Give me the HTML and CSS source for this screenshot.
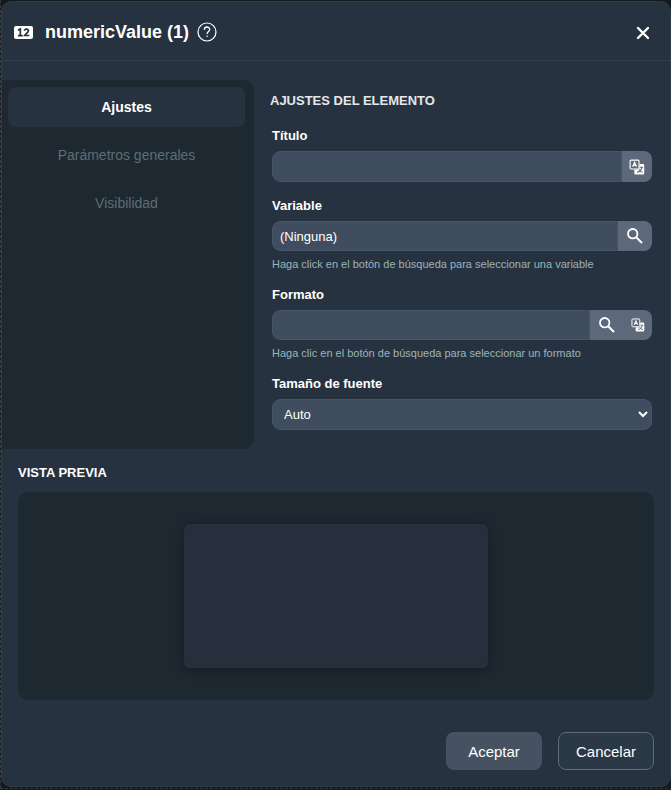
FILE: index.html
```html
<!DOCTYPE html>
<html lang="es">
  <head>
    <meta charset="utf-8">
    <meta name="viewport" content="width=device-width, initial-scale=1">
    <title>numericValue (1)</title>
    <link rel="stylesheet" href="styles.css">
  </head>
  <body>
    <!-- Shared icons -->
    <svg class="icon-defs" aria-hidden="true">
      <symbol id="icon-search" viewBox="0 0 16 16">
        <circle cx="5.7" cy="5.7" r="4.7" fill="none" stroke="currentColor" stroke-width="1.8"></circle>
        <path d="M9.2 9.2L15 15" fill="none" stroke="currentColor" stroke-width="2"></path>
      </symbol>
      <symbol id="icon-translate" viewBox="0 0 16 16">
        <path d="M10.5 5H14a1.2 1.2 0 0 1 1.2 1.2v8A1.2 1.2 0 0 1 14 15.4H6.5a1.2 1.2 0 0 1-1.2-1.2V10.5h5.2z" fill="currentColor"></path>
        <rect x="1.1" y="1.1" width="8.9" height="8.9" rx="1" fill="#5d697a" stroke="currentColor" stroke-width="1.1"></rect>
        <path d="M3.7 7.8l1.9-4.6 1.9 4.6M4.4 6.3h2.4" fill="none" stroke="currentColor" stroke-width="1.2"></path>
        <path d="M11 8.3h3M13 8.5c-.6 2.5-2.2 4-5 4.8M10 10.8c.8 1.3 2 2.1 3.6 2.5" fill="none" stroke="#5d697a" stroke-width="1.1"></path>
      </symbol>
    </svg>

    <div class="dialog" role="dialog" aria-labelledby="dialog-title">
      <header class="dialog-header">
        <svg class="type-icon" viewBox="0 0 19 13">
          <rect width="19" height="13" rx="2" fill="#fff"></rect>
          <path d="M4 4.2L6.3 3v6.5M4 9.7h4.8M10.5 4.8c.2-2.4 4-2.3 3.9 0 0 1.5-2.6 2.9-3.7 4.7h4.6" fill="none" stroke="#273240" stroke-width="1.7"></path>
        </svg>
        <h1 id="dialog-title">numericValue (1)</h1>
        <button class="icon-button" aria-label="Ayuda">
          <svg width="20" height="20" viewBox="0 0 20 20" fill="none" stroke="currentColor">
            <circle cx="10" cy="10" r="9" stroke-width="1.2"></circle>
            <path d="M7.3 7.7c0-3.6 5.4-3.5 5.4-.2 0 2-2.6 2.2-2.6 4.5" stroke-width="1.3"></path>
            <circle cx="10.1" cy="14.2" r=".8" fill="currentColor" stroke="none"></circle>
          </svg>
        </button>
        <button class="icon-button close" aria-label="Cerrar">
          <svg width="14" height="16" viewBox="0 0 14 16" fill="none" stroke="currentColor" stroke-width="2.4" stroke-linecap="round">
            <path d="M2 4l10 10M12 4L2 14"></path>
          </svg>
        </button>
      </header>

      <div class="dialog-body">
        <nav class="tabs">
          <button class="tab active">Ajustes</button>
          <button class="tab">Parámetros generales</button>
          <button class="tab">Visibilidad</button>
        </nav>

        <form class="settings">
          <h2>AJUSTES DEL ELEMENTO</h2>
          <div class="field">
            <label for="titulo">Título</label>
            <div class="input-group">
              <input type="text" id="titulo">
              <button type="button" class="addon" aria-label="Traducir"><svg class="icon"><use href="#icon-translate"></use></svg></button>
            </div>
          </div>
          <div class="field">
            <label for="variable">Variable</label>
            <div class="input-group with-search">
              <input type="text" id="variable" value="(Ninguna)">
              <button type="button" class="addon search" aria-label="Buscar variable"><svg class="icon"><use href="#icon-search"></use></svg></button>
            </div>
            <p class="help">Haga click en el botón de búsqueda para seleccionar una variable</p>
          </div>
          <div class="field">
            <label for="formato">Formato</label>
            <div class="input-group with-search">
              <input type="text" id="formato">
              <button type="button" class="addon search" aria-label="Buscar formato"><svg class="icon"><use href="#icon-search"></use></svg></button>
              <button type="button" class="addon translate" aria-label="Traducir formato"><svg class="icon small"><use href="#icon-translate"></use></svg></button>
            </div>
            <p class="help">Haga clic en el botón de búsqueda para seleccionar un formato</p>
          </div>
          <div class="field">
            <label for="fuente">Tamaño de fuente</label>
            <div class="input-group">
              <select id="fuente">
                <option>Auto</option>
              </select>
              <svg class="chevron" viewBox="0 0 10 8" fill="none" stroke="currentColor" stroke-width="2"><path d="M1 2l4 4 4-4"></path></svg>
            </div>
          </div>
        </form>
      </div>

      <section class="preview">
        <h2>VISTA PREVIA</h2>
        <div class="preview-area">
          <div class="preview-card"></div>
        </div>
      </section>

      <footer class="dialog-footer">
        <button class="btn btn-primary">Aceptar</button>
        <button class="btn btn-outline">Cancelar</button>
      </footer>
    </div>
  </body>
</html>
```

FILE: styles.css
```css
* {
  box-sizing: border-box;
}

body {
  margin: 0;
  padding: 1px 0 3px 1px;
  background-color: #14191d;
  /* dashed grid lines of the canvas behind the dialog */
  background-image:
    repeating-linear-gradient(to bottom, #35393c 0 3px, transparent 3px 5px),
    repeating-linear-gradient(to right, #35393c 0 3px, transparent 3px 5px);
  background-size: 1px 100%, 100% 1px;
  background-position: left top, left bottom 1px;
  background-repeat: no-repeat;
  font-family: "Liberation Sans", Arial, sans-serif;
  color: #fff;
}

button, input, select {
  font-family: inherit;
  color: inherit;
}

button {
  border: none;
  background: none;
  padding: 0;
  cursor: pointer;
}

h1, h2, p {
  margin: 0;
}

.icon-defs {
  position: absolute;
  width: 0;
  height: 0;
}

.dialog {
  background-color: #273240;
  border: 1px solid #2e3b48;
  border-radius: 10px;
}

/* Header */
.dialog-header {
  display: flex;
  align-items: center;
  height: 59px;
  padding: 2px 20px 0 12px;
  border-bottom: 1px solid #303d4b;
}

.type-icon {
  width: 19px;
  height: 13px;
  margin-right: 12px;
}

h1 {
  font-size: 18px;
  line-height: 24px;
}

.icon-button {
  display: flex;
  margin-left: 8px;
}

.close {
  margin-left: auto;
}

/* Tabs and settings */
.dialog-body {
  display: flex;
  gap: 16px;
  padding: 19px 18px 0 0;
}

.tabs {
  display: flex;
  flex-direction: column;
  gap: 8px;
  flex: 0 0 252px;
  padding: 7px 9px 7px 6px;
  background-color: #1e2831;
  border-radius: 0 10px 10px 0;
}

.tab {
  height: 40px;
  border-radius: 8px;
  font-size: 14px;
  color: #5d6d75;
}

.tab.active {
  background-color: #273240;
  color: #fff;
  font-weight: bold;
}

.settings {
  flex: 1;
  min-width: 0;
  padding: 11px 0 19px;
}

h2 {
  font-size: 13px;
  line-height: 20px;
  color: #e4e8ea;
}

.field {
  margin: 0 0 16px 2px;
}

h2 + .field {
  margin-top: 17px;
}

.field:last-child {
  margin-bottom: 0;
}

.field label {
  display: block;
  margin-bottom: 7px;
  font-size: 13px;
  line-height: 16px;
  font-weight: bold;
}

.input-group {
  position: relative;
  display: flex;
  height: 31px;
  border-radius: 8px;
  overflow: hidden;
}

.input-group.with-search {
  height: 30px;
}

.input-group input,
.input-group select {
  flex: 1;
  min-width: 0;
  margin: 0;
  padding: 0 7px;
  border: 1px solid #46566a;
  border-radius: 8px 0 0 8px;
  background-color: #3f4d5f;
  font-size: 13px;
  outline: none;
}

.input-group select {
  padding: 0 11px;
  border-radius: 8px;
  appearance: none;
}

.chevron {
  position: absolute;
  right: 4px;
  top: 11px;
  width: 10px;
  height: 8px;
  pointer-events: none;
}

.addon {
  display: flex;
  align-items: center;
  justify-content: center;
  width: 30px;
  background-color: #5d697a;
}

.search {
  width: 34px;
}

.translate {
  width: 28px;
}

.icon {
  width: 16px;
  height: 16px;
}

.icon.small {
  width: 14px;
  height: 14px;
}

.help {
  margin-top: 7px;
  font-size: 11px;
  line-height: 13px;
  color: #9ab4b9;
}

/* Preview */
.preview {
  padding: 14px 16px 0;
}

.preview h2 {
  color: #fff;
}

.preview-area {
  display: flex;
  justify-content: center;
  margin-top: 9px;
  padding: 32px;
  background-color: #1e2831;
  border-radius: 10px;
}

.preview-card {
  width: 304px;
  height: 144px;
  background-color: #262f3b;
  border-radius: 6px;
  box-shadow: 0 2px 12px rgba(0, 0, 0, 0.3);
}

/* Footer */
.dialog-footer {
  display: flex;
  justify-content: flex-end;
  gap: 16px;
  padding: 32px 16px 16px;
}

.btn {
  width: 96px;
  height: 38px;
  border-radius: 8px;
  font-size: 15px;
}

.btn-primary {
  background-color: #465262;
}

.btn-outline {
  border: 1px solid #5a6d7a;
  background-color: #2b3845;
}
```
